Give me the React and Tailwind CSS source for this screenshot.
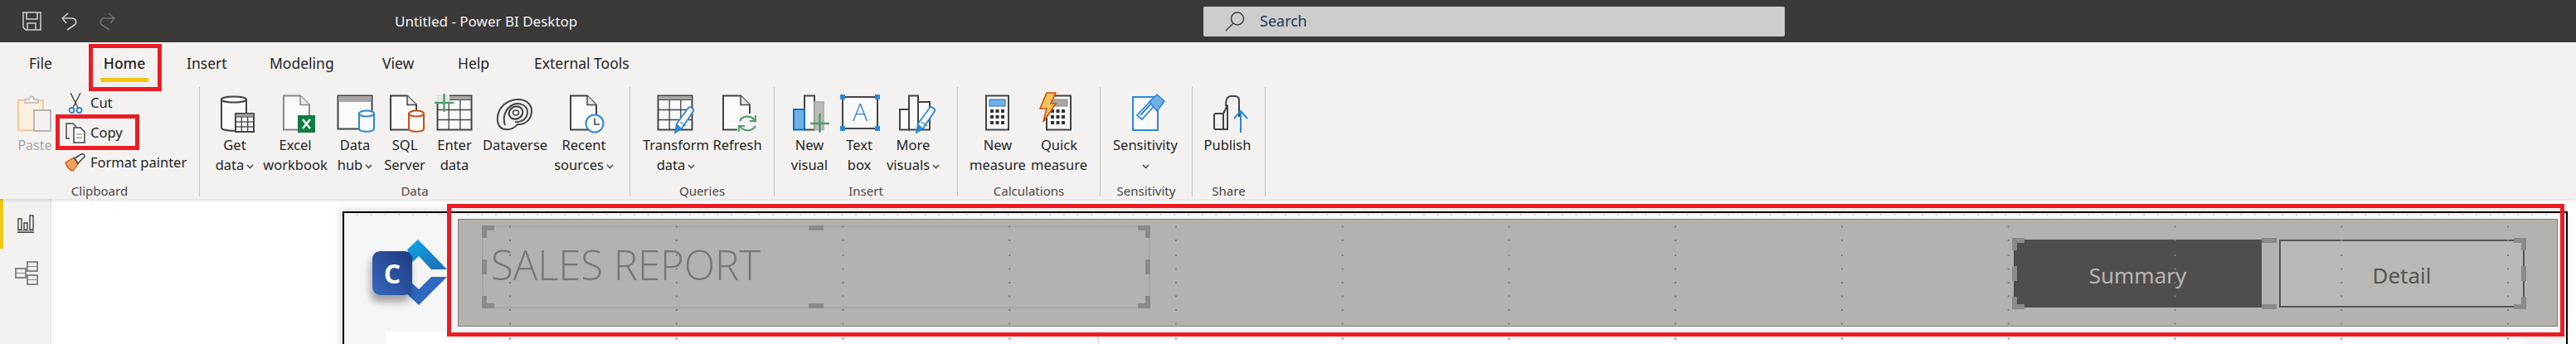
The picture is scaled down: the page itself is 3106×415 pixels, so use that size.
import React from "react";

const GRID_COLS = Array.from({ length: 13 }, (_, i) => 199 + i * 200.75);
const GRID_ROWS = [15.5, 32, 50, 66.5, 83, 99.5, 116, 132.5, 150.5];
const RULER = Array.from({ length: 160 }, (_, i) => 15 + i * 16.7);

const Svg = ({ children }) => (
  <svg width="48" height="48" viewBox="0 0 48 48" fill="none" className="overflow-visible shrink-0">
    {children}
  </svg>
);

const PageShape = ({ x = 8, w = 32, stroke = "#444444" }) => (
  <>
    <path d={`M${x} 2.5H${x + w - 11}L${x + w} 13.5V43.5H${x}Z`} fill="#fafafa" stroke={stroke} strokeWidth="2" />
    <path d={`M${x + w - 11} 2.5V13.5H${x + w}`} stroke={stroke} strokeWidth="1.5" fill="#e8e8e8" />
  </>
);

const Cylinder = ({ x, y, w, h, stroke, fill = "#fafafa" }) => (
  <>
    <path d={`M${x} ${y + 4}V${y + h - 4}C${x} ${y + h + 1} ${x + w} ${y + h + 1} ${x + w} ${y + h - 4}V${y + 4}Z`} fill={fill} stroke={stroke} strokeWidth="2" />
    <ellipse cx={x + w / 2} cy={y + 4} rx={w / 2} ry="3.5" fill={fill} stroke={stroke} strokeWidth="2" />
  </>
);

const TableGrid = ({ x, y, w, h, cols = 3, rows = 3, head = 5, stroke = "#444444" }) => (
  <>
    <rect x={x} y={y} width={w} height={h} fill="#fafafa" stroke={stroke} strokeWidth="2" />
    <rect x={x} y={y} width={w} height={head} fill="#a8a6a4" stroke={stroke} strokeWidth="1" />
    {Array.from({ length: cols - 1 }, (_, i) => (
      <path key={i} d={`M${x + ((i + 1) * w) / cols} ${y + head}V${y + h}`} stroke={stroke} strokeWidth="1.3" />
    ))}
    {Array.from({ length: rows - 1 }, (_, i) => (
      <path key={i} d={`M${x} ${y + head + ((i + 1) * (h - head)) / rows}H${x + w}`} stroke={stroke} strokeWidth="1.3" />
    ))}
  </>
);

const Pencil = ({ x, y }) => (
  <g transform={`translate(${x} ${y})`}>
    <path d="M2 32L4 21L18 2C20 0 25 3 24 6L10 27Z" fill="#ffffff" stroke="#2b88d8" strokeWidth="1.8" />
    <path d="M2 32L4 21L10 27Z" fill="#2b88d8" />
    <path d="M8 19L15 24" stroke="#2b88d8" strokeWidth="1.2" />
  </g>
);

const Calc = ({ x = 10, w = 27, screen = "#71afe5", screenStroke = "#106ebe" }) => (
  <>
    <rect x={x} y="2.5" width={w} height="41" fill="#fafafa" stroke="#444444" strokeWidth="2" />
    <rect x={x + 4} y="7" width={w - 8} height="8" fill={screen} stroke={screenStroke} strokeWidth="1" />
    {[19, 26, 33].map((yy) =>
      [0, 1, 2].map((c) => <rect key={`${yy}${c}`} x={x + 5 + c * 6.5} y={yy} width="4" height="4" fill="#333333" />)
    )}
  </>
);

const GetDataIcon = () => (
  <Svg>
    <Cylinder x={8} y={3} w={30} h={42} stroke="#444444" />
    <TableGrid x={25} y={24} w={22} h={22} rows={3} head={4} />
  </Svg>
);
const ExcelIcon = () => (
  <Svg>
    <PageShape x={10} w={31} stroke="#8a8886" />
    <rect x="27" y="26" width="21" height="21" fill="#107c41" />
    <path d="M33 31L42 42M42 31L33 42" stroke="#ffffff" strokeWidth="2.4" />
  </Svg>
);
const DataHubIcon = () => (
  <Svg>
    <rect x="3.5" y="2.5" width="41" height="40" fill="#fafafa" stroke="#444444" strokeWidth="2" />
    <rect x="4" y="3" width="40" height="7" fill="#a8a6a4" />
    <Cylinder x={29} y={20} w={18} h={26} stroke="#2b88d8" />
  </Svg>
);
const SqlIcon = () => (
  <Svg>
    <PageShape x={7} w={31} />
    <Cylinder x={29} y={20} w={18} h={26} stroke="#ca5010" />
  </Svg>
);
const EnterDataIcon = () => (
  <Svg>
    <TableGrid x={3.5} y={2.5} w={41} h={41} />
    <rect x="0" y="0" width="18" height="10" fill="#f3f2f1" opacity="0.9" />
    <path d="M0 11H23M11.5 0V22" stroke="#4d9e6a" strokeWidth="2.4" />
  </Svg>
);
const DataverseIcon = () => (
  <Svg>
    <path d="M13 43C6 43 2 37 3 28C4 17 13 8 26 7C36 6 44 12 44 21C44 31 36 38 27 37C24 41 18 44 13 43Z" fill="#f3f2f1" stroke="#444444" strokeWidth="2" />
    <path d="M12 38C9 30 11 18 22 13C31 10 39 15 39 22C39 30 32 35 24 34" stroke="#444444" strokeWidth="2" />
    <ellipse cx="25" cy="23" rx="8.500" ry="7.500" stroke="#444444" strokeWidth="2.200" transform="rotate(-25 25 23)" />
    <ellipse cx="25" cy="23" rx="3.500" ry="3" stroke="#444444" strokeWidth="1.600" />
  </Svg>
);
const RecentIcon = () => (
  <Svg>
    <PageShape x={8} w={31} />
    <circle cx="37" cy="36" r="10.5" fill="#ffffff" stroke="#2b88d8" strokeWidth="2" />
    <path d="M37 29.5V37H43" stroke="#444444" strokeWidth="1.6" />
  </Svg>
);
const TransformIcon = () => (
  <Svg>
    <TableGrid x={2.5} y={2.5} w={41} h={41} />
    <Pencil x={21} y={15} />
  </Svg>
);
const RefreshIcon = () => (
  <Svg>
    <PageShape x={7} w={32} />
    <rect x="24" y="24" width="24" height="24" fill="#f3f2f1" />
    <path d="M27 33C30 26 41 26 45 32M46 39C42 46 31 46 27 39" stroke="#4d9e6a" strokeWidth="2.2" />
    <path d="M46 26V33H39M26 46V39H33" stroke="#4d9e6a" strokeWidth="2" />
  </Svg>
);
const NewVisualIcon = () => (
  <Svg>
    <rect x="18" y="2.5" width="12" height="41" fill="#fafafa" stroke="#444444" strokeWidth="2" />
    <rect x="30" y="10" width="11" height="33.5" fill="#bdbbb9" stroke="#a8a6a4" strokeWidth="1.5" />
    <rect x="5" y="19" width="13" height="24.5" fill="#71afe5" stroke="#106ebe" strokeWidth="2" />
    <path d="M25 36H48M36.5 24V47" stroke="#4d9e6a" strokeWidth="2.4" />
  </Svg>
);
const TextBoxIcon = () => (
  <Svg>
    <rect x="4" y="4" width="42" height="38" fill="#fafafa" stroke="#444444" strokeWidth="2" />
    {[[4, 4], [46, 4], [4, 42], [46, 42]].map(([cx, cy]) => (
      <rect key={`${cx}${cy}`} x={cx - 3} y={cy - 3} width="6" height="6" fill="#2b88d8" />
    ))}
    <text x="25" y="33" textAnchor="middle" fontSize="30" fontFamily="'Open Sans', sans-serif" fontWeight="300" fill="#2b88d8">
      A
    </text>
  </Svg>
);
const MoreVisualsIcon = () => (
  <Svg>
    <rect x="8" y="19" width="11" height="24.5" fill="#fafafa" stroke="#444444" strokeWidth="2" />
    <rect x="19" y="2.5" width="11" height="41" fill="#fafafa" stroke="#444444" strokeWidth="2" />
    <rect x="30" y="10" width="14" height="33.5" fill="#fafafa" stroke="#444444" strokeWidth="2" />
    <Pencil x={26} y={15} />
  </Svg>
);
const NewMeasureIcon = () => (
  <Svg>
    <Calc />
  </Svg>
);
const QuickMeasureIcon = () => (
  <Svg>
    <Calc x={9} w={29} screen="#a8a6a4" screenStroke="#8a8886" />
    <path d="M9 -1H20L14 12H20L5 34L9 18H1Z" fill="#f7c35a" stroke="#ca5010" strokeWidth="1.6" />
  </Svg>
);
const SensitivityIcon = () => (
  <Svg>
    <rect x="9" y="4" width="30" height="40" fill="#fafafa" stroke="#2b88d8" strokeWidth="2" />
    <path d="M14 26L32 7L37 12L20 31Z" fill="#fafafa" stroke="#2b88d8" strokeWidth="1.8" />
    <path d="M18 26L31 12" stroke="#2b88d8" strokeWidth="2" />
    <path d="M29 10L38 1L47 9L38 21Z" fill="#71afe5" stroke="#2b88d8" strokeWidth="1.5" />
  </Svg>
);
const PublishIcon = () => (
  <Svg>
    <path d="M10 24H19V43H10C9 43 8 42 8 41V26C8 25 9 24 10 24Z" stroke="#444444" strokeWidth="2" />
    <path d="M19 24L24 14V43H19" stroke="#444444" strokeWidth="2" />
    <path d="M24 14H22C22 6 24 3 28 3H33C36 3 38 5 38 8V28" stroke="#444444" strokeWidth="2" />
    <path d="M40 47V21M32 30L40 21L48 30" stroke="#2b88d8" strokeWidth="2" />
  </Svg>
);

const RibbonButton = ({ icon, lines, chevron, width }) => (
  <div className={`${width} flex flex-col items-center shrink-0 pt-2`}>
    {icon}
    <div className="flex flex-col items-center mt-[2px] whitespace-nowrap text-[16.5px] leading-[24px] text-[#252423]">
      {lines.map((line, i) => (
        <span key={line} className="flex items-center gap-[3px]">
          {line}
          {chevron && i === lines.length - 1 && <Chevron />}
        </span>
      ))}
    </div>
  </div>
);

const Chevron = () => (
  <svg width="9" height="6" viewBox="0 0 9 6" fill="none" className="mt-[3px]">
    <path d="M1 1L4.5 4.5L8 1" stroke="#444444" strokeWidth="1.5" />
  </svg>
);

const RibbonGroup = ({ label, width, children }) => (
  <div className={`${width} h-[132px] flex flex-col shrink-0 border-r border-[#c8c6c4]`}>
    <div className="h-[113px] flex shrink-0">{children}</div>
    <div className="h-6 shrink-0 text-center text-[15px] leading-[24px] text-[#484644]">{label}</div>
  </div>
);

const SmallRow = ({ icon, text }) => (
  <div className="h-9 flex items-center gap-[6px] text-[16.5px] text-[#252423] whitespace-nowrap">
    <div className="w-[25px] h-[25px] flex items-center justify-center">{icon}</div>
    {text}
  </div>
);

// selection frame drawn by Power BI around a focused visual
const Handles = () => (
  <div className="absolute -inset-[2px] pointer-events-none">
    <div className="absolute left-0 top-0 w-[15px] h-[15px] border-l-[6px] border-t-[6px] border-[#8b8a88]" />
    <div className="absolute right-0 top-0 w-[15px] h-[15px] border-r-[6px] border-t-[6px] border-[#8b8a88]" />
    <div className="absolute left-0 bottom-0 w-[15px] h-[15px] border-l-[6px] border-b-[6px] border-[#8b8a88]" />
    <div className="absolute right-0 bottom-0 w-[15px] h-[15px] border-r-[6px] border-b-[6px] border-[#8b8a88]" />
    <div className="absolute left-0 top-1/2 -translate-y-1/2 w-[6px] h-[18px] bg-[#8b8a88]" />
    <div className="absolute right-0 top-1/2 -translate-y-1/2 w-[6px] h-[18px] bg-[#8b8a88]" />
    <div className="absolute left-1/2 top-0 -translate-x-1/2 w-[18px] h-[6px] bg-[#8b8a88]" />
    <div className="absolute left-1/2 bottom-0 -translate-x-1/2 w-[18px] h-[6px] bg-[#8b8a88]" />
  </div>
);

const Logo = () => (
  <div className="relative w-[91px] h-[82px] shrink-0">
    <svg width="91" height="82" viewBox="0 0 91 82" className="absolute left-0 top-0">
      <defs>
        <linearGradient id="logoTop" x1="0" y1="0" x2="0.6" y2="1">
          <stop offset="0" stopColor="#0aa8e8" />
          <stop offset="1" stopColor="#1c74bd" />
        </linearGradient>
      </defs>
      <path d="M42 13L55 1L90 37H71L56 21L47 29Z" fill="url(#logoTop)" />
      <path d="M90 46H71L56 61L47 53L42 67L56 80Z" fill="#3068c0" />
    </svg>
    <div className="absolute left-0 top-[15px] w-[48px] h-[53px] rounded-[9px] bg-gradient-to-tr from-[#3668be] to-[#1f3b80] shadow-[-2px_8px_10px_rgba(0,0,0,0.35)] flex items-center justify-center text-white text-[32px] font-bold font-['Open_Sans',sans-serif]">
      C
    </div>
  </div>
);

export default function App() {
  return (
    <div className="w-[3106px] h-[415px] overflow-hidden relative flex flex-col bg-white font-['Noto_Sans','Open_Sans',sans-serif]">
      {/* title bar */}
      <div className="h-[51px] shrink-0 bg-[#3b3a39] flex items-center pl-[27px]">
        <svg width="23" height="23" viewBox="0 0 23 23" fill="none" className="shrink-0">
          <path d="M1 1H22V22H4L1 19Z" stroke="#d2d0ce" strokeWidth="1.5" />
          <path d="M5 1V9H18V1M6 22V14H16V22" stroke="#d2d0ce" strokeWidth="1.5" />
        </svg>
        <svg width="22" height="22" viewBox="0 0 22 22" fill="none" className="shrink-0 ml-[23px]">
          <path d="M2 7H14C19 7 20 13 17 15L8 21M2 7L9 1M2 7L7 13" stroke="#d2d0ce" strokeWidth="1.6" />
        </svg>
        <svg width="22" height="22" viewBox="0 0 22 22" fill="none" className="shrink-0 ml-[23px]">
          <path d="M20 7H8C3 7 2 13 5 15L14 21M20 7L13 1M20 7L15 13" stroke="#6f6e6c" strokeWidth="1.6" />
        </svg>
        <div className="ml-[336px] w-[220px] shrink-0 whitespace-nowrap text-[17px] text-[#f3f2f1]">Untitled - Power BI Desktop</div>
        <div className="ml-[755px] w-[701px] h-9 shrink-0 bg-[#cdcdcb] rounded-[2px] flex items-center pl-[26px]">
          <svg width="24" height="24" viewBox="0 0 24 24" fill="none" className="shrink-0">
            <circle cx="15" cy="8.5" r="7.5" stroke="#3b3a39" strokeWidth="1.4" />
            <path d="M10 14L1 23" stroke="#3b3a39" strokeWidth="1.4" />
          </svg>
          <span className="ml-[18px] text-[18px] text-[#243a5e]">Search</span>
        </div>
      </div>

      {/* ribbon */}
      <div className="h-[189px] shrink-0 bg-[#f3f2f1] shadow-[0_2px_4px_rgba(0,0,0,0.12)] relative z-10 flex flex-col">
        <div className="h-[54px] shrink-0 flex text-[17.5px] text-[#252423] whitespace-nowrap pt-[12px]">
          <span className="ml-[35px] w-[29px]">File</span>
          <div className="ml-[57px] w-[58px] flex flex-col items-center">
            <span className="font-medium">Home</span>
            <div className="w-[58px] h-[5px] bg-[#f2c811] mt-[5px]" />
          </div>
          <span className="ml-[46px] w-[52px]">Insert</span>
          <span className="ml-[48px] w-[88px]">Modeling</span>
          <span className="ml-[48px] w-[44px]">View</span>
          <span className="ml-[47px] w-[42px]">Help</span>
          <span className="ml-[50px] w-[125px]">External Tools</span>
        </div>
        <div className="flex">
          <RibbonGroup label="Clipboard" width="w-[241px]">
            <div className="w-[78px] shrink-0 flex flex-col items-center pt-[10px] pl-[6px]">
              <svg width="42" height="44" viewBox="0 0 42 44" fill="none">
                <rect x="1" y="6" width="30" height="36" fill="#fbf0e0" stroke="#f5c99a" strokeWidth="2" />
                <path d="M9 9V5H14C14 0 20 0 20 5H25V9Z" fill="#f3f2f1" stroke="#b8b6b4" strokeWidth="1.3" />
                <rect x="20" y="18" width="20" height="25" fill="#f3f2f1" stroke="#b8b6b4" strokeWidth="2" />
              </svg>
              <span className="mt-[4px] text-[16px] text-[#a6a6a6]">Paste</span>
            </div>
            <div className="flex flex-col pt-[1px]">
              <SmallRow
                text="Cut"
                icon={
                  <svg width="18" height="25" viewBox="0 0 18 25" fill="none">
                    <path d="M3 0L12 18M15 0L6 18" stroke="#444444" strokeWidth="1.4" />
                    <circle cx="4.5" cy="21" r="3" stroke="#2b88d8" strokeWidth="1.8" />
                    <circle cx="13.5" cy="21" r="3" stroke="#2b88d8" strokeWidth="1.8" />
                  </svg>
                }
              />
              <SmallRow
                text="Copy"
                icon={
                  <svg width="24" height="25" viewBox="0 0 24 25" fill="none">
                    <path d="M5 19H1V1H9L13 5" stroke="#444444" strokeWidth="1.4" />
                    <path d="M10 6H18L23 11V24H10Z" fill="#fafafa" stroke="#444444" strokeWidth="1.5" />
                    <path d="M13 14H20M13 18H20" stroke="#777777" strokeWidth="1.2" />
                  </svg>
                }
              />
              <SmallRow
                text="Format painter"
                icon={
                  <svg width="25" height="22" viewBox="0 0 25 22" fill="none">
                    <path d="M1 11L11 5L16 13L10 21C6 21 2 15 1 11Z" fill="#f0a35a" stroke="#ca5010" strokeWidth="1.2" />
                    <path d="M12 6L20 1C23 0 25 3 23 5L16 12Z" fill="#fafafa" stroke="#444444" strokeWidth="1.5" />
                  </svg>
                }
              />
            </div>
          </RibbonGroup>

          <RibbonGroup label="Data" width="w-[519px]">
            <RibbonButton width="w-[84px]" icon={<GetDataIcon />} lines={["Get", "data"]} chevron />
            <RibbonButton width="w-[62px]" icon={<ExcelIcon />} lines={["Excel", "workbook"]} />
            <RibbonButton width="w-[82px]" icon={<DataHubIcon />} lines={["Data", "hub"]} chevron />
            <RibbonButton width="w-[38px]" icon={<SqlIcon />} lines={["SQL", "Server"]} />
            <RibbonButton width="w-[82px]" icon={<EnterDataIcon />} lines={["Enter", "data"]} />
            <RibbonButton width="w-[64px]" icon={<DataverseIcon />} lines={["Dataverse"]} />
            <RibbonButton width="w-[102px]" icon={<RecentIcon />} lines={["Recent", "sources"]} chevron />
          </RibbonGroup>

          <RibbonGroup label="Queries" width="w-[174px]">
            <RibbonButton width="w-[110px]" icon={<TransformIcon />} lines={["Transform", "data"]} chevron />
            <RibbonButton width="w-[38px]" icon={<RefreshIcon />} lines={["Refresh"]} />
          </RibbonGroup>

          <RibbonGroup label="Insert" width="w-[221px]">
            <RibbonButton width="w-[84px]" icon={<NewVisualIcon />} lines={["New", "visual"]} />
            <RibbonButton width="w-[36px]" icon={<TextBoxIcon />} lines={["Text", "box"]} />
            <RibbonButton width="w-[94px]" icon={<MoreVisualsIcon />} lines={["More", "visuals"]} chevron />
          </RibbonGroup>

          <RibbonGroup label="Calculations" width="w-[172px]">
            <RibbonButton width="w-[96px]" icon={<NewMeasureIcon />} lines={["New", "measure"]} />
            <RibbonButton width="w-[52px]" icon={<QuickMeasureIcon />} lines={["Quick", "measure"]} />
          </RibbonGroup>

          <RibbonGroup label="Sensitivity" width="w-[111px]">
            <div className="w-[108px] flex flex-col items-center shrink-0 pt-2">
              <SensitivityIcon />
              <div className="mt-[2px] text-[16.5px] leading-[24px] text-[#252423]">Sensitivity</div>
              <div className="h-6 flex items-center">
                <Chevron />
              </div>
            </div>
          </RibbonGroup>

          <RibbonGroup label="Share" width="w-[88px]">
            <RibbonButton width="w-[84px]" icon={<PublishIcon />} lines={["Publish"]} />
          </RibbonGroup>
        </div>
      </div>

      {/* body */}
      <div className="flex-1 flex min-h-0">
        <div className="w-[62px] shrink-0 bg-[#f3f2f1] border-r border-[#e1dfdd] relative">
          <div className="absolute left-0 top-0 w-1 h-[60px] bg-[#f2c811]" />
          <div className="pl-[21px] pt-[19px]">
            <svg width="21" height="22" viewBox="0 0 21 22" fill="none">
              <path d="M0 20H20M0 21.5H20" stroke="#444444" strokeWidth="1" />
              <path d="M1 5H5V18H1ZM8 10H12V18H8ZM15 1H19V18H15Z" stroke="#444444" strokeWidth="1.4" />
            </svg>
          </div>
          <div className="pl-[18px] pt-[34px]">
            <svg width="28" height="29" viewBox="0 0 28 29" fill="none" stroke="#8a8886" strokeWidth="2">
              <rect x="15" y="1" width="12" height="11" />
              <path d="M15 6.500H27" strokeWidth="1" />
              <rect x="1" y="9" width="12" height="11" />
              <path d="M1 14.500H13" strokeWidth="1" />
              <rect x="15" y="17" width="12" height="11" />
              <path d="M15 22.500H27" strokeWidth="1" />
              <path d="M13 12H15M13 18H15" />
            </svg>
          </div>
        </div>

        <div className="flex-1 bg-white pl-[351px] pt-[15px]">
          <div className="relative w-[2683px] h-[200px] border-l-2 border-t-2 border-r-2 border-black bg-[#f5f5f5] shadow-[-3px_-2px_8px_rgba(0,0,0,0.15)]">
            <div className="flex items-center pt-[7px]">
              <div className="ml-[34px]">
                <Logo />
              </div>
              <div className="ml-[12px] w-[2532px] h-[130px] shrink-0 bg-[#b4b2af] border border-[#7f7e7c] flex items-start">
                <div className="relative ml-[28px] mt-[7px] w-[806px] h-[100px] shrink-0 border-2 border-[#a9a7a4] flex items-center pl-[9px] pb-[6px]">
                  <Handles />
                  <span className="text-[49px] leading-none font-light text-[#787775] font-['Open_Sans',sans-serif] whitespace-nowrap">
                    SALES REPORT
                  </span>
                </div>
                <div className="relative ml-[1041px] mt-[24px] w-[616px] h-[82px] shrink-0 flex gap-[21px]">
                  <Handles />
                  <div className="w-[299px] pt-1 bg-[#504e4b] flex items-center justify-center text-[26px] text-[#b8b6b3]">Summary</div>
                  <div className="w-[296px] pt-1 bg-[#bab8b5] border-2 border-[#565553] flex items-center justify-center text-[26px] text-[#565553]">Detail</div>
                </div>
              </div>
            </div>
            <div className="ml-[50px] mt-[6px] w-[2579px] h-[20px] bg-white flex">
              <div className="w-[861px] h-full border-r-[3px] border-[#e6e6e6]" />
            </div>

            {/* gridlines of the report canvas */}
            <svg width="2681" height="198" className="absolute left-0 top-0 pointer-events-none">
              {RULER.map((x) => (
                <rect key={x} x={x} y="1" width="2" height="2" fill="#d8d8d8" />
              ))}
              {GRID_COLS.map((x) =>
                GRID_ROWS.map((y) => <rect key={`${x}-${y}`} x={x} y={y} width="2" height="2" fill="#7d7c7a" />)
              )}
            </svg>
          </div>
        </div>
      </div>

      {/* red annotation boxes */}
      <div className="absolute left-[107px] top-[53px] w-[88px] h-[57px] border-[5px] border-[#ed1c24] z-20" />
      <div className="absolute left-[67px] top-[138px] w-[101px] h-[43px] border-[5px] border-[#ed1c24] z-20" />
      <div className="absolute left-[539px] top-[246px] w-[2553px] h-[160px] border-[5px] border-[#ed1c24] z-20" />
    </div>
  );
}
